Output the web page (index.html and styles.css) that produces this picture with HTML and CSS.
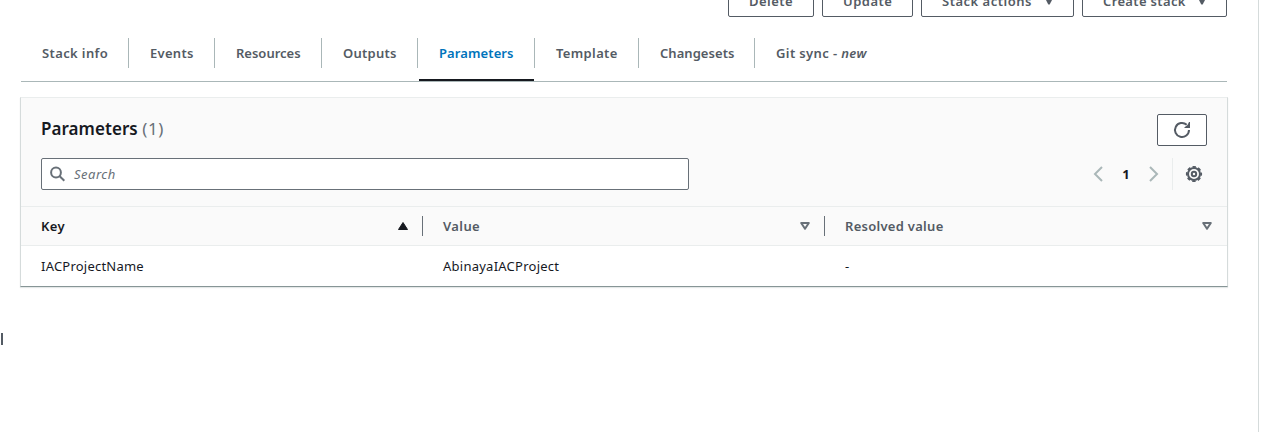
FILE: index.html
```html
<!DOCTYPE html>
<html lang="en">
<head>
<meta charset="utf-8">
<title>Stack parameters</title>
<link rel="stylesheet" href="styles.css">
</head>
<body>
<div class="page">
  <main class="content">
    <div class="actions">
      <button class="btn btn-delete"><span class="t-delete">Delete</span></button>
      <button class="btn btn-update"><span class="t-update">Update</span></button>
      <button class="btn btn-stack"><span class="t-actions">Stack actions</span><svg class="caret" width="10" height="8" viewBox="0 0 10 8"><path d="M.5 0h9L5.700 7.500H4.300z"/></svg></button>
      <button class="btn btn-create"><span class="t-create">Create stack</span><svg class="caret" width="10" height="8" viewBox="0 0 10 8"><path d="M.5 0h9L5.700 7.500H4.300z"/></svg></button>
    </div>
    <nav class="tabs">
      <a class="tab tab-info"><span>Stack info</span></a>
      <a class="tab tab-events"><span>Events</span></a>
      <a class="tab tab-resources"><span>Resources</span></a>
      <a class="tab tab-outputs"><span>Outputs</span></a>
      <a class="tab tab-parameters active"><span>Parameters</span></a>
      <a class="tab tab-template"><span>Template</span></a>
      <a class="tab tab-changesets"><span>Changesets</span></a>
      <a class="tab tab-git"><span>Git sync - <em>new</em></span></a>
    </nav>
    <section class="panel">
      <header class="panel-head">
        <div class="title-row">
          <h2><span class="title">Parameters</span> <span class="count">(1)</span></h2>
          <button class="refresh" aria-label="Refresh"><svg width="18" height="18" viewBox="0 0 18 18" fill="none" stroke="#545b64" stroke-width="2"><path d="M16 9a7 7 0 1 1-2.300-5.200"/><path d="M17 1v6h-6l1.500-1.500L14.500 4 16 1z" fill="#545b64" stroke="none"/></svg></button>
        </div>
        <div class="filter-row">
          <div class="search">
            <svg width="16" height="16" viewBox="0 0 16 16" fill="none" stroke="#687078" stroke-width="2"><circle cx="6" cy="6.500" r="4.900"/><path d="m9.700 10.200 4.600 4.500"/></svg>
            <span>Search</span>
          </div>
          <div class="pager">
            <svg width="10" height="16" viewBox="0 0 10 16" fill="none" stroke="#aab7b8" stroke-width="2"><path d="M9 1 2 8l7 7"/></svg>
            <b>1</b>
            <svg width="10" height="16" viewBox="0 0 10 16" fill="none" stroke="#aab7b8" stroke-width="2"><path d="m1 1 7 7-7 7"/></svg>
          </div>
          <div class="settings"><svg width="18" height="18" viewBox="0 0 18 18" fill="none" stroke="#545b64" stroke-width="2"><circle cx="9" cy="9" r="6"/><circle cx="9" cy="9" r="7.200" stroke-width="1.800" stroke-dasharray="3.300 2.355" stroke-dashoffset="1.650"/><circle cx="9" cy="9" r="2.200"/></svg></div>
        </div>
      </header>
      <div class="row row-head">
        <div class="cell sorted"><span class="t-key">Key</span><svg width="10" height="8" viewBox="0 0 10 8"><path d="M5 .5 9.500 7.500h-9z" fill="#16191f" stroke="#16191f" stroke-linejoin="round"/></svg></div>
        <div class="cell"><span class="t-value">Value</span><svg width="10" height="8" viewBox="0 0 10 8"><path d="M1.200 1h7.600L5 6.800z" fill="none" stroke="#687078" stroke-width="2" stroke-linejoin="round"/></svg></div>
        <div class="cell"><span class="t-resolved">Resolved value</span><svg width="10" height="8" viewBox="0 0 10 8"><path d="M1.200 1h7.600L5 6.800z" fill="none" stroke="#687078" stroke-width="2" stroke-linejoin="round"/></svg></div>
      </div>
      <div class="row row-data">
        <div class="cell"><span class="t-name">IACProjectName</span></div>
        <div class="cell"><span class="t-project">AbinayaIACProject</span></div>
        <div class="cell"><span>-</span></div>
      </div>
    </section>
    <div class="edge-mark"></div>
  </main>
</div>
</body>
</html>
```
FILE: styles.css
```css
* { box-sizing: border-box; }
body { margin: 0; height: 432px; overflow: hidden; background: #fff; font: 13px/20px "Noto Sans", sans-serif; color: #16191f; }
svg { display: block; flex: none; }
.page { width: 1259px; height: 432px; border-right: 1px solid #d5dbdb; overflow: hidden; }
.content { padding-left: 20px; }
.actions { display: flex; justify-content: flex-end; gap: 8px; width: 1207px; margin-top: -15px; }
.btn { height: 32px; padding: 0 20px; display: flex; align-items: center; justify-content: space-between; border: 1px solid #545b64; border-radius: 2px; background: #fff; color: #545b64; font: 600 13px/20px "Noto Sans", sans-serif; white-space: nowrap; }
.btn-delete { width: 86px; letter-spacing: .45px; }
.btn-update { width: 91px; letter-spacing: .5px; }
.btn-stack { width: 153px; letter-spacing: .5px; }
.btn-create { width: 145px; letter-spacing: .35px; }
.btn-stack, .btn-create { padding-right: 19px; }
.caret { fill: #545b64; }
.tabs { display: flex; width: 1206px; height: 65px; margin-left: 1px; padding-top: 21px; border-bottom: 1px solid #aab7b8; }
.tab { position: relative; height: 30px; padding: 5px 0 0 21px; border-right: 1px solid #aab7b8; color: #545b64; font-weight: 600; white-space: nowrap; }
.tab-info { width: 108px; letter-spacing: .38px; }
.tab-events { width: 86px; letter-spacing: .3px; }
.tab-resources { width: 107px; }
.tab-outputs { width: 96px; letter-spacing: .25px; }
.tab-parameters { width: 117px; letter-spacing: .1px; }
.tab-template { width: 104px; letter-spacing: .35px; }
.tab-changesets { width: 116px; letter-spacing: .05px; }
.tab-git { border-right: 0; letter-spacing: .38px; }
.active { color: #0073bb; }
.active::after { content: ""; position: absolute; left: 1px; right: 0; top: 41px; height: 2px; background: #16191f; }
.panel { width: 1208px; height: 190px; margin-top: 15px; border: 1px solid #d5dbdb; border-top-color: #eaeded; border-bottom-color: #879596; box-shadow: 0 1px 1px #e4e8e8; }
.panel-head { height: 108px; padding: 16px 20px 0; background: #fafafa; }
.title-row { display: flex; justify-content: space-between; height: 44px; }
h2 { margin: 3px 0 0; font-size: 17px; line-height: 24px; font-weight: 600; }
.title { letter-spacing: .05px; }
.count { color: #687078; font-weight: 400; letter-spacing: .6px; }
.refresh { width: 50px; height: 32px; padding: 0; display: flex; align-items: center; justify-content: center; border: 1px solid #545b64; border-radius: 2px; background: #fff; }
.filter-row { display: flex; align-items: center; height: 32px; }
.search { display: flex; align-items: center; gap: 8px; width: 648px; height: 32px; padding-left: 8px; border: 1px solid #687078; border-radius: 2px; background: #fff; color: #687078; font-style: italic; letter-spacing: .5px; }
.pager { display: flex; align-items: center; justify-content: space-between; width: 66px; margin-left: 404px; }
.settings { height: 32px; margin-left: 13px; padding: 7px 0 0 12px; border-left: 1px solid #eaeded; }
.row { display: grid; grid-template-columns: 402px 402px 402px; }
.row-head { height: 40px; background: #fafafa; border: solid #eaeded; border-width: 1px 0; align-items: center; font-weight: 600; color: #545b64; }
.row-head .cell { display: flex; align-items: center; justify-content: space-between; height: 20px; padding: 0 14px 0 20px; border-right: 1px solid #687078; }
.row-head .cell:last-child { border-right-color: transparent; }
.row-head .sorted { color: #16191f; }
.t-key, .t-value { letter-spacing: .4px; }
.t-resolved { letter-spacing: .28px; }
.row-data .cell { padding: 10px 20px; }
.t-name { letter-spacing: .22px; }
.t-project { letter-spacing: .25px; }
.edge-mark { width: 2px; height: 12px; margin: 46px 0 0 -19px; background: #545b64; }
```
